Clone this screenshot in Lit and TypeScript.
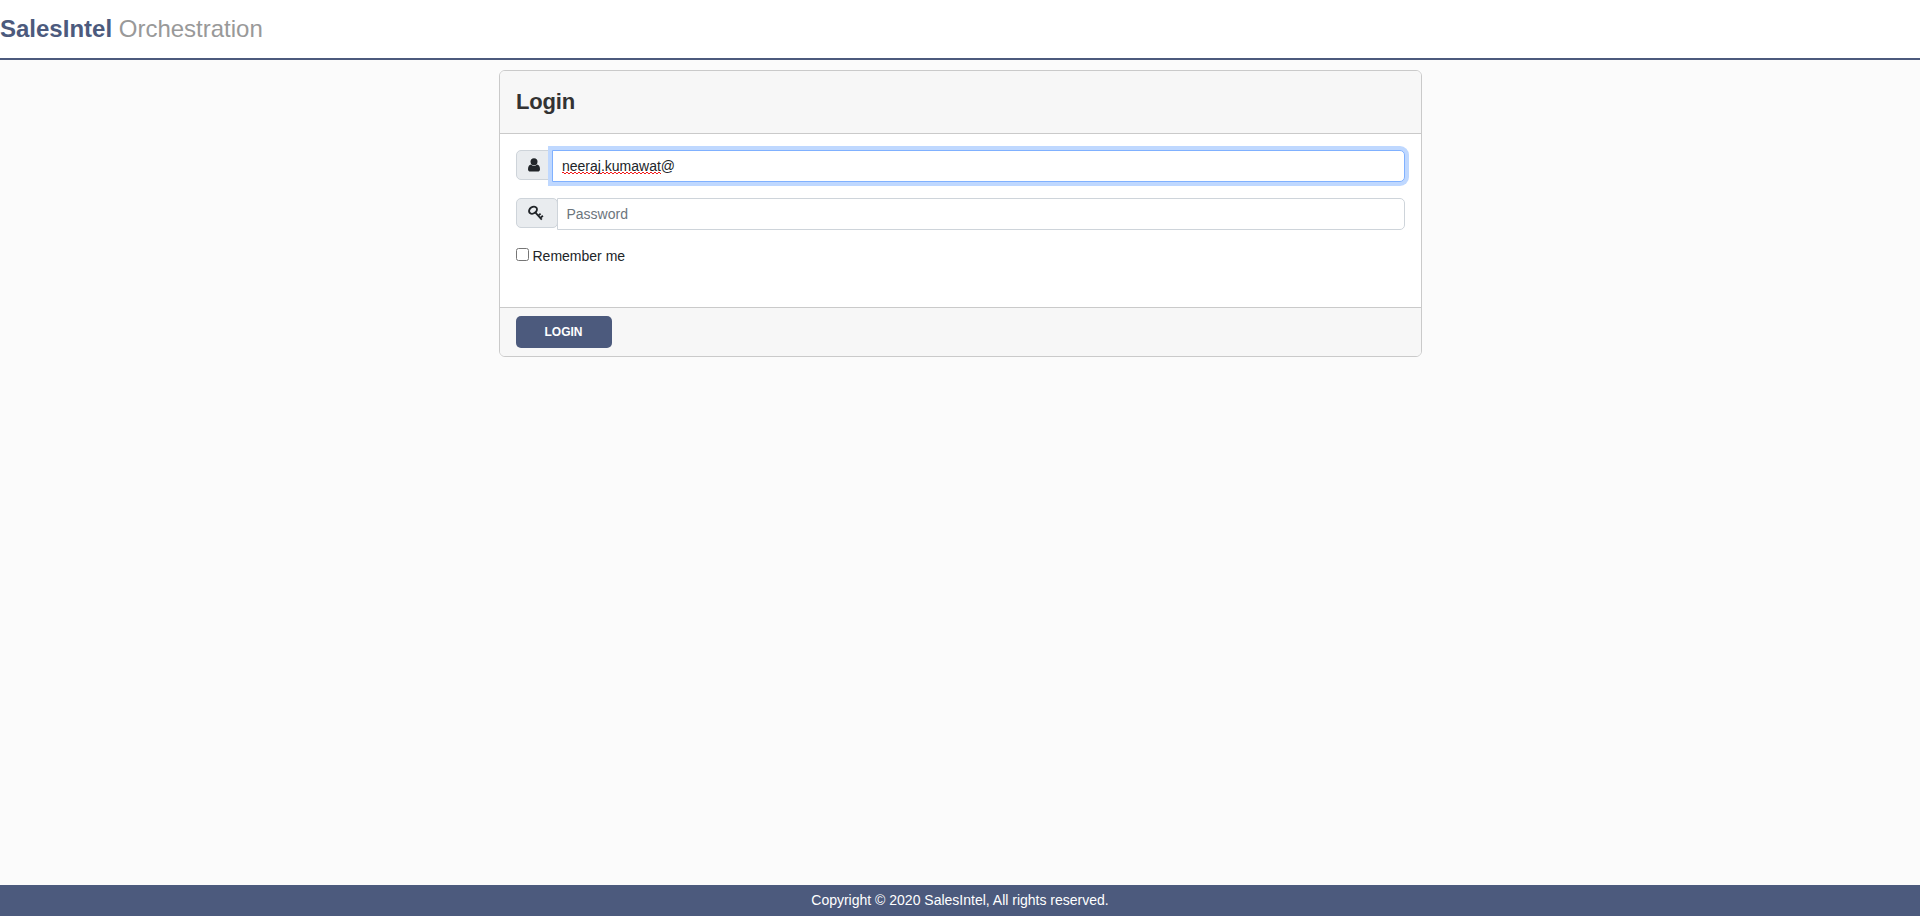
import { LitElement, html, css } from "lit";
import { customElement, state } from "lit/decorators.js";

@customElement("app-root")
export class AppRoot extends LitElement {
  @state() private misspelt = "neeraj.kumawat";
  @state() private rest = "@";

  static styles = css`
    :host {
      display: flex;
      flex-direction: column;
      height: 100vh;
      background: #fbfbfb;
      color: #212529;
      font: 14px/21px "Liberation Sans", Arial, sans-serif;
    }
    *, *::before, *::after { box-sizing: border-box; }
    .bar {
      flex: none;
      height: 60px;
      padding-top: 11px;
      background: #fff;
      border-bottom: 2px solid #4c5a7d;
      font-size: 24px;
      line-height: 36px;
      color: #999;
    }
    .brand { color: #4c5a7d; font-weight: 700; }
    main { flex: 1; padding-top: 10px; }
    .card {
      width: 923px;
      margin-left: 499px;
      background: #fff;
      border: 1px solid #cacaca;
      border-radius: 6px;
      overflow: hidden;
    }
    .head {
      height: 63px;
      padding: 15px 16px;
      background: #f7f7f7;
      border-bottom: 1px solid #cacaca;
    }
    h1 { margin: 0; font-size: 22px; line-height: 32px; letter-spacing: -0.15px; color: #333; }
    .body { height: 173px; padding: 16px 16px 0; }
    .group { display: flex; align-items: flex-start; height: 32px; margin-bottom: 16px; }
    .addon {
      flex: none;
      display: flex;
      align-items: center;
      width: 37px;
      height: 30px;
      padding-left: 11px;
      margin-right: -1px;
      background: #e9ecef;
      border: 1px solid #ced4da;
      border-radius: 5px;
    }
    .addon.wide { width: 42px; }
    .addon svg { display: block; }
    .field {
      flex: 1;
      min-width: 0;
      height: 32px;
      padding: 0 9px;
      line-height: 30px;
      background: #fff;
      border: 1px solid #ced4da;
      border-radius: 0 5px 5px 0;
      color: #212529;
    }
    .field.hint { padding-left: 8.5px; color: #6c757d; }
    .field.focus { border-color: #80b1ff; box-shadow: 0 0 0 4px #bfd8ff; z-index: 1; }
    .typed {
      background-image:
        linear-gradient(90deg, #f01818 50%, transparent 50%),
        linear-gradient(90deg, transparent 50%, #f01818 50%);
      background-size: 4px 1px;
      background-repeat: repeat-x;
      background-position: 0 calc(100% - 1px), 0 100%;
    }
    .remember { display: flex; }
    .check {
      width: 13px;
      height: 13px;
      margin: 2px 3.5px 0 0;
      background: #fff;
      border: 1px solid #767676;
      border-radius: 2.5px;
    }
    .foot { height: 49px; padding: 8px 16px; background: #f7f7f7; border-top: 1px solid #cacaca; }
    .login {
      display: block;
      width: 96px;
      height: 32px;
      padding: 0 1px 0 0;
      border: 0;
      border-radius: 5px;
      background: #4c5a7d;
      color: #fff;
      font: 700 12px/32px "Liberation Sans", Arial, sans-serif;
    }
    footer {
      flex: none;
      height: 31px;
      background: #4c5a7d;
      color: #fff;
      text-align: center;
      line-height: 31px;
    }
  `;

  render() {
    return html`
      <header class="bar"><span class="brand">SalesIntel</span> Orchestration</header>
      <main>
        <section class="card">
          <div class="head"><h1>Login</h1></div>
          <div class="body">
            <div class="group">
              <span class="addon">
                <svg width="12" height="14" viewBox="0 0 12 14" fill="#212529">
                  <circle cx="6" cy="3.8" r="3.5" />
                  <path d="M3 6.5C1 6.7 0 8.6 0 11.3C0 12.8 1 13.6 2.3 13.6H9.7C11 13.6 12 12.8 12 11.3C12 8.6 11 6.7 9 6.5C7.4 8.3 4.6 8.3 3 6.5Z" />
                </svg>
              </span>
              <div class="field focus"><span class="typed">${this.misspelt}</span>${this.rest}</div>
            </div>
            <div class="group">
              <span class="addon wide">
                <svg width="16" height="16" viewBox="0 0 16 16" fill="none" stroke="#212529">
                  <ellipse cx="5" cy="5.2" rx="4.2" ry="3.2" transform="rotate(-35 5 5.2)" stroke-width="1.9" />
                  <path d="M7.5 7.7L13.8 14.6M10.4 10.7L12.6 8.7M12.4 12.9L14.9 10.7" stroke-width="1.8" />
                </svg>
              </span>
              <div class="field hint">Password</div>
            </div>
            <label class="remember"><span class="check"></span>Remember me</label>
          </div>
          <div class="foot"><button class="login">LOGIN</button></div>
        </section>
      </main>
      <footer>Copyright © 2020 SalesIntel, All rights reserved.</footer>
    `;
  }
}
